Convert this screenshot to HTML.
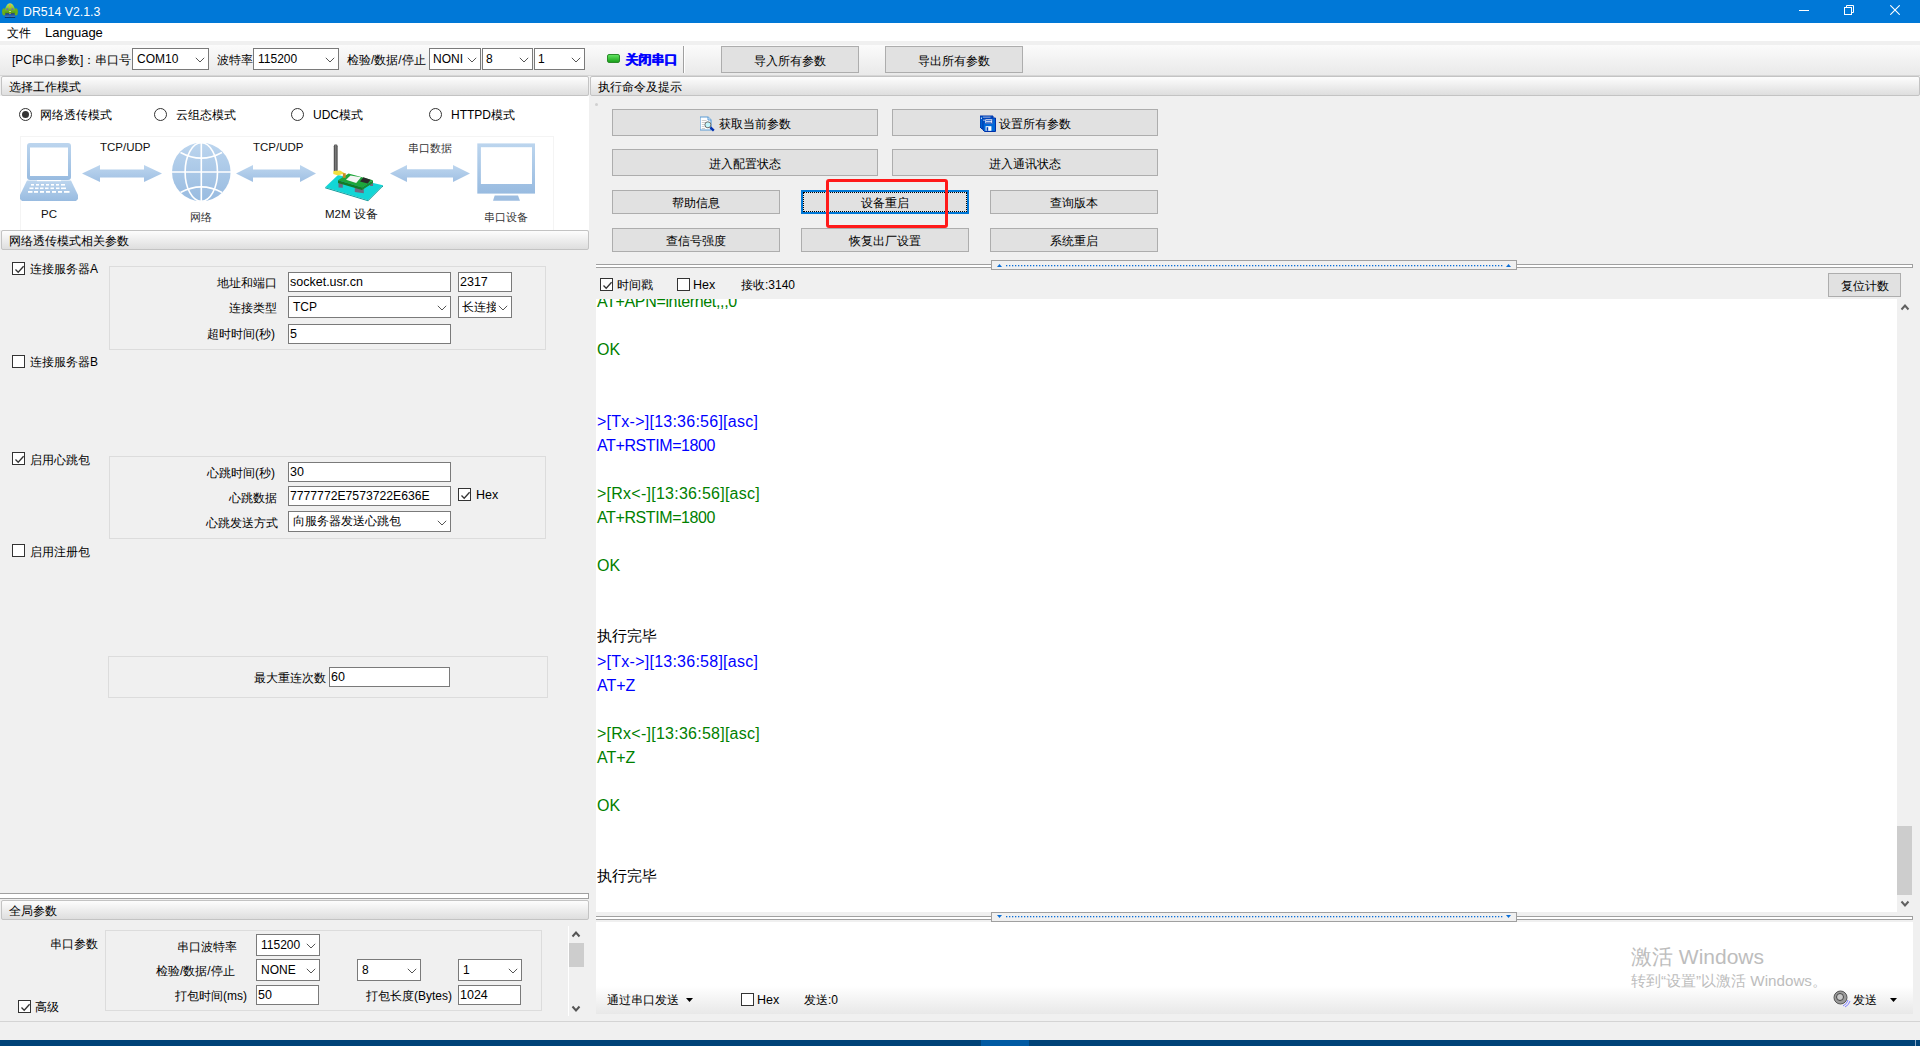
<!DOCTYPE html>
<html><head><meta charset="utf-8">
<style>
*{margin:0;padding:0;box-sizing:border-box}
html,body{width:1920px;height:1046px;overflow:hidden;background:#f0f0f0;font-family:"Liberation Sans",sans-serif;font-size:12px;color:#000}
.a{position:absolute}
.t{position:absolute;white-space:nowrap;line-height:14px;font-size:12px}
.btn{position:absolute;background:#e1e1e1;border:1px solid #adadad;text-align:center;font-size:12px;white-space:nowrap}
.inp{position:absolute;background:#fff;border:1px solid #7a7a7a;white-space:nowrap;font-size:12px;padding-left:1px;overflow:hidden}
.cmb{position:absolute;background:#fff;border:1px solid #7a7a7a;white-space:nowrap;font-size:12px;padding-left:4px;overflow:hidden}
.cmb svg{position:absolute;right:3px;top:50%;margin-top:-2px}
.cb{position:absolute;width:13px;height:13px;border:1px solid #333;background:#fff}
.hdr{position:absolute;height:20px;border:1px solid #c3c3c3;border-radius:2px;background:linear-gradient(#fdfdfd,#dedede);font-size:12px;line-height:19px;padding-left:7px;padding-top:1px;white-space:nowrap}
.grp{position:absolute;border:1px solid #dcdcdc}
.rad{position:absolute;width:13px;height:13px;border:1px solid #333;border-radius:50%;background:#fff}
.log{position:absolute;left:597px;font-size:16px;line-height:24px;white-space:nowrap}
.g{color:#008000}.b{color:#0000ff}
</style></head>
<body>
<!-- title bar -->
<div class="a" style="left:0;top:0;width:1920px;height:23px;background:#0078d7"></div>
<div class="t" style="left:23px;top:5px;color:#fff;font-size:12.3px">DR514 V2.1.3</div>
<!-- menu -->
<div class="a" style="left:0;top:23px;width:1920px;height:18px;background:#fff"></div>
<div class="t" style="left:7px;top:26px">文件</div>
<div class="t" style="left:45px;top:26px;font-size:13px">Language</div>
<!-- toolbar -->
<div class="a" style="left:0;top:45px;width:1920px;height:31px;background:linear-gradient(#fbfbfb,#e9e9e9);border-bottom:1px solid #d6d6d6"></div>


<div class="t" style="left:12px;top:53px">[PC串口参数]：串口号</div>
<div class="cmb" style="left:132px;top:48px;width:77px;height:22px;line-height:20px">COM10<svg width="10" height="6" viewBox="0 0 10 6"><path d="M0.8 0.8 L5 5 L9.2 0.8" fill="none" stroke="#555" stroke-width="1"/></svg></div>
<div class="t" style="left:217px;top:53px">波特率</div>
<div class="cmb" style="left:253px;top:48px;width:86px;height:22px;line-height:20px">115200<svg width="10" height="6" viewBox="0 0 10 6"><path d="M0.8 0.8 L5 5 L9.2 0.8" fill="none" stroke="#555" stroke-width="1"/></svg></div>
<div class="t" style="left:347px;top:53px">检验/数据/停止</div>
<div class="cmb" style="left:429px;top:48px;width:52px;height:22px;line-height:20px;padding-left:3px">NONI<svg width="10" height="6" viewBox="0 0 10 6"><path d="M0.8 0.8 L5 5 L9.2 0.8" fill="none" stroke="#555" stroke-width="1"/></svg></div>
<div class="cmb" style="left:482px;top:48px;width:51px;height:22px;line-height:20px;padding-left:3px">8<svg width="10" height="6" viewBox="0 0 10 6"><path d="M0.8 0.8 L5 5 L9.2 0.8" fill="none" stroke="#555" stroke-width="1"/></svg></div>
<div class="cmb" style="left:534px;top:48px;width:51px;height:22px;line-height:20px;padding-left:3px">1<svg width="10" height="6" viewBox="0 0 10 6"><path d="M0.8 0.8 L5 5 L9.2 0.8" fill="none" stroke="#555" stroke-width="1"/></svg></div>
<div class="a" style="left:607px;top:54px;width:13px;height:9px;border-radius:2px;background:linear-gradient(#5fe35f,#1aa01a);border:1px solid #2a8a2a"></div>
<div class="t" style="left:625px;top:53px;color:#0000ff;font-weight:bold;font-size:12.5px;text-shadow:0.6px 0 0 #0000ff">关闭串口</div>
<div class="a" style="left:683px;top:46px;width:1px;height:27px;background:#a0a0a0"></div>
<div class="a" style="left:684px;top:46px;width:1px;height:27px;background:#fff"></div>
<div class="btn" style="left:721px;top:46px;width:138px;height:27px;line-height:29px">导入所有参数</div>
<div class="btn" style="left:885px;top:46px;width:138px;height:27px;line-height:29px">导出所有参数</div>

<!-- left panel top white -->
<div class="a" style="left:0;top:96px;width:589px;height:134px;background:#fff"></div>

<div class="rad" style="left:19px;top:108px"><div class="a" style="left:2px;top:2px;width:7px;height:7px;border-radius:50%;background:#333"></div></div>
<div class="t" style="left:40px;top:108px">网络透传模式</div>
<div class="rad" style="left:154px;top:108px"></div>
<div class="t" style="left:176px;top:108px">云组态模式</div>
<div class="rad" style="left:291px;top:108px"></div>
<div class="t" style="left:313px;top:108px">UDC模式</div>
<div class="rad" style="left:429px;top:108px"></div>
<div class="t" style="left:451px;top:108px">HTTPD模式</div>

<svg class="a" style="left:0;top:96px" width="589" height="134" viewBox="0 96 589 134">
<defs>
<linearGradient id="lb" x1="0" y1="0" x2="0" y2="1"><stop offset="0" stop-color="#bcd5ee"/><stop offset="1" stop-color="#98bbe0"/></linearGradient>
<linearGradient id="ar" x1="0" y1="0" x2="0" y2="1"><stop offset="0" stop-color="#bdd6ef"/><stop offset="1" stop-color="#a0c0e3"/></linearGradient>
</defs>
<rect x="20.5" y="136.5" width="533" height="100" fill="none" stroke="#f4f4f4"/>
<!-- laptop -->
<rect x="27" y="143" width="44" height="37" rx="3" fill="url(#lb)"/>
<rect x="30" y="147.5" width="38" height="28.5" fill="#fff"/>
<path d="M27 180.5 L71 180.5 L78 195 L78 199 L76 201 L22 201 L20 199 L20 195 Z" fill="url(#lb)"/>
<rect x="37" y="180" width="24" height="1.2" fill="#fff"/>
<g fill="#fff">
<rect x="31" y="184" width="3" height="1.6"/><rect x="36" y="184" width="3" height="1.6"/><rect x="41" y="184" width="3" height="1.6"/><rect x="46" y="184" width="3" height="1.6"/><rect x="51" y="184" width="3" height="1.6"/><rect x="56" y="184" width="3" height="1.6"/><rect x="61" y="184" width="4" height="1.6"/>
<rect x="29.5" y="187.5" width="4" height="1.6"/><rect x="35" y="187.5" width="3.5" height="1.6"/><rect x="40" y="187.5" width="3.5" height="1.6"/><rect x="45" y="187.5" width="3.5" height="1.6"/><rect x="50.5" y="187.5" width="3.5" height="1.6"/><rect x="56" y="187.5" width="3.5" height="1.6"/><rect x="61" y="187.5" width="5" height="1.6"/>
<rect x="28" y="191" width="4.5" height="1.8"/><rect x="34" y="191" width="4" height="1.8"/><rect x="40" y="191" width="4" height="1.8"/><rect x="46" y="191" width="4" height="1.8"/><rect x="52" y="191" width="4" height="1.8"/><rect x="58" y="191" width="4" height="1.8"/><rect x="64" y="191" width="5.5" height="1.8"/>
</g>
<!-- arrows -->
<path d="M82 173.5 L100 165 L100 169.5 L144 169.5 L144 165 L162 173.5 L144 182 L144 177.5 L100 177.5 L100 182 Z" fill="url(#ar)"/>
<path d="M236 173.5 L253 165 L253 169.5 L300 169.5 L300 165 L316 173.5 L300 182 L300 177.5 L253 177.5 L253 182 Z" fill="url(#ar)"/>
<path d="M390 173.5 L407 165 L407 169.3 L453 169.3 L453 165 L470 173.5 L453 182 L453 177.6 L407 177.6 L407 182 Z" fill="url(#ar)"/>
<!-- globe -->
<g>
<circle cx="201.3" cy="172" r="29.3" fill="url(#lb)"/>
<g fill="none" stroke="#fff" stroke-width="1.6">
<line x1="172" y1="172" x2="231" y2="172"/>
<line x1="201.3" y1="142" x2="201.3" y2="202"/>
<ellipse cx="201.3" cy="172" rx="16.2" ry="29.3"/>
<path d="M180.5 152.5 Q201.3 163.8 222 152.5"/>
<path d="M180.5 192.5 Q201.3 181.2 222 192.5"/>
</g>
</g>
<!-- monitor -->
<rect x="477.3" y="143.4" width="57.7" height="50.2" fill="url(#lb)"/>
<rect x="480.9" y="147.2" width="51.1" height="36.8" fill="#fff"/>
<path d="M494.7 195.5 L518 195.5 L520 200.7 L493 200.7 Z" fill="#9dbde0"/>
<!-- device -->
<linearGradient id="ant" x1="0" y1="0" x2="1" y2="0"><stop offset="0" stop-color="#3a3a3a"/><stop offset="0.5" stop-color="#808080"/><stop offset="1" stop-color="#3a3a3a"/></linearGradient>
<path d="M325.1 187.2 L338 174.9 L383 185.3 L368.1 200.3 Z" fill="#12d6d6"/>
<path d="M325.1 187.2 L368.1 200.3 L368.1 201.3 L325.1 188.2 Z" fill="#0e9a9a"/>
<path d="M368.1 200.3 L383 185.3 L383 186.2 L368.1 201.3 Z" fill="#0e9a9a"/>
<path d="M338.5 183 L342.8 183 L342.8 187.8 L338.5 187.4 Z" fill="#6e6a80"/>
<path d="M354.8 187.4 L363.8 187.4 L363.8 193.3 L354.8 192 Z" fill="#6e6a80"/>
<path d="M370 182 L373 182 L373 186 L370 186 Z" fill="#6e6a80"/>
<path d="M338 180.2 L348.5 173.5 L373 180.2 L362 187.4 Z" fill="#1ea53a"/>
<path d="M338 180.2 L362 187.4 L362 190 L338 183 Z" fill="#137a26"/>
<path d="M362 187.4 L373 180.2 L373 183 L362 190 Z" fill="#188a2e"/>
<path d="M346 179.7 L350.5 175.4 L361 177.3 L356.2 183 Z" fill="#f4f4f4"/>
<path d="M360 181.6 L363.4 177.3 L370.5 179.7 L367.7 183.5 Z" fill="#2a2a2a"/>
<rect x="333.8" y="144.3" width="3.8" height="28" rx="1.9" fill="url(#ant)"/>
<path d="M333.3 171 L340 170.6 L344.7 173.2 L338 175.5 L333.3 174 Z" fill="#f2e040"/>
<path d="M342.8 173.2 L345.7 173.2 L345.7 177.8 L342.8 177.8 Z" fill="#c98a22"/>
<!-- labels -->
<g font-family="Liberation Sans, sans-serif" font-size="11.5" fill="#111">
<text x="100" y="150.8">TCP/UDP</text>
<text x="253" y="150.8">TCP/UDP</text>
<text x="41" y="218">PC</text>
<text x="325" y="218">M2M 设备</text>
</g>
<g font-family="Liberation Serif, serif" font-size="11.3" fill="#333">
<text x="190" y="221">网络</text>
<text x="408" y="152">串口数据</text>
<text x="484" y="221">串口设备</text>
</g>
</svg>
<div class="hdr" style="left:1px;top:76px;width:588px">选择工作模式</div>
<div class="hdr" style="left:590px;top:76px;width:1330px">执行命令及提示</div>
<div class="hdr" style="left:1px;top:230px;width:588px">网络透传模式相关参数</div>
<div class="hdr" style="left:1px;top:900px;width:588px">全局参数</div>


<div class="cb" style="left:12px;top:262px"><svg class="a" style="left:1px;top:1px" width="11" height="11" viewBox="0 0 11 11"><path d="M1.5 5.5 L4.2 8.3 L9.6 2.2" fill="none" stroke="#333" stroke-width="1.3"/></svg></div>
<div class="t" style="left:30px;top:262px">连接服务器A</div>
<div class="grp" style="left:109px;top:266px;width:437px;height:84px"></div>
<div class="t" style="left:217px;top:276px">地址和端口</div>
<div class="inp" style="left:288px;top:272px;width:163px;height:20px;line-height:18px;font-size:12.5px">socket.usr.cn</div>
<div class="inp" style="left:458px;top:272px;width:54px;height:20px;line-height:18px;font-size:12.5px">2317</div>
<div class="t" style="left:229px;top:301px">连接类型</div>
<div class="cmb" style="left:288px;top:296px;width:163px;height:22px;line-height:20px">TCP<svg width="10" height="6" viewBox="0 0 10 6"><path d="M0.8 0.8 L5 5 L9.2 0.8" fill="none" stroke="#555" stroke-width="1"/></svg></div>
<div class="cmb" style="left:458px;top:296px;width:54px;height:22px;line-height:20px;padding-left:3px"><span style="display:inline-block;width:34px;overflow:hidden">长连接</span><svg width="10" height="6" viewBox="0 0 10 6"><path d="M0.8 0.8 L5 5 L9.2 0.8" fill="none" stroke="#555" stroke-width="1"/></svg></div>
<div class="t" style="left:207px;top:327px">超时时间(秒)</div>
<div class="inp" style="left:288px;top:324px;width:163px;height:20px;line-height:18px;font-size:12.5px">5</div>

<div class="cb" style="left:12px;top:355px"></div>
<div class="t" style="left:30px;top:355px">连接服务器B</div>

<div class="cb" style="left:12px;top:452px"><svg class="a" style="left:1px;top:1px" width="11" height="11" viewBox="0 0 11 11"><path d="M1.5 5.5 L4.2 8.3 L9.6 2.2" fill="none" stroke="#333" stroke-width="1.3"/></svg></div>
<div class="t" style="left:30px;top:453px">启用心跳包</div>
<div class="grp" style="left:109px;top:456px;width:437px;height:83px"></div>
<div class="t" style="left:207px;top:466px">心跳时间(秒)</div>
<div class="inp" style="left:288px;top:462px;width:163px;height:20px;line-height:18px;font-size:12.5px">30</div>
<div class="t" style="left:229px;top:491px">心跳数据</div>
<div class="inp" style="left:288px;top:486px;width:163px;height:20px;line-height:18px;font-size:12.2px">7777772E7573722E636E</div>
<div class="cb" style="left:458px;top:488px"><svg class="a" style="left:1px;top:1px" width="11" height="11" viewBox="0 0 11 11"><path d="M1.5 5.5 L4.2 8.3 L9.6 2.2" fill="none" stroke="#333" stroke-width="1.3"/></svg></div>
<div class="t" style="left:476px;top:488px;font-size:12.5px">Hex</div>
<div class="t" style="left:206px;top:516px">心跳发送方式</div>
<div class="cmb" style="left:288px;top:511px;width:163px;height:21px;line-height:19px">向服务器发送心跳包<svg width="10" height="6" viewBox="0 0 10 6"><path d="M0.8 0.8 L5 5 L9.2 0.8" fill="none" stroke="#555" stroke-width="1"/></svg></div>

<div class="cb" style="left:12px;top:544px"></div>
<div class="t" style="left:30px;top:545px">启用注册包</div>

<div class="grp" style="left:108px;top:656px;width:440px;height:42px"></div>
<div class="t" style="left:254px;top:671px">最大重连次数</div>
<div class="inp" style="left:329px;top:667px;width:121px;height:20px;line-height:18px;font-size:12.5px">60</div>

<!-- left splitter -->
<div class="a" style="left:0;top:893px;width:589px;height:6px;background:#fff;border-top:1px solid #a0a0a0;border-bottom:1px solid #a0a0a0;border-right:1px solid #a0a0a0"></div>

<div class="grp" style="left:105px;top:930px;width:437px;height:81px"></div>
<div class="t" style="left:50px;top:937px">串口参数</div>
<div class="t" style="left:177px;top:940px">串口波特率</div>
<div class="cmb" style="left:256px;top:934px;width:64px;height:22px;line-height:20px;padding-left:4px"><span style="display:inline-block;width:42px;overflow:hidden">115200</span><svg width="10" height="6" viewBox="0 0 10 6"><path d="M0.8 0.8 L5 5 L9.2 0.8" fill="none" stroke="#555" stroke-width="1"/></svg></div>
<div class="t" style="left:156px;top:964px">检验/数据/停止</div>
<div class="cmb" style="left:256px;top:959px;width:64px;height:22px;line-height:20px">NONE<svg width="10" height="6" viewBox="0 0 10 6"><path d="M0.8 0.8 L5 5 L9.2 0.8" fill="none" stroke="#555" stroke-width="1"/></svg></div>
<div class="cmb" style="left:357px;top:959px;width:64px;height:22px;line-height:20px">8<svg width="10" height="6" viewBox="0 0 10 6"><path d="M0.8 0.8 L5 5 L9.2 0.8" fill="none" stroke="#555" stroke-width="1"/></svg></div>
<div class="cmb" style="left:458px;top:959px;width:64px;height:22px;line-height:20px">1<svg width="10" height="6" viewBox="0 0 10 6"><path d="M0.8 0.8 L5 5 L9.2 0.8" fill="none" stroke="#555" stroke-width="1"/></svg></div>
<div class="t" style="left:175px;top:989px">打包时间(ms)</div>
<div class="inp" style="left:256px;top:985px;width:63px;height:20px;line-height:18px;font-size:12.5px">50</div>
<div class="t" style="left:366px;top:989px">打包长度(Bytes)</div>
<div class="inp" style="left:458px;top:985px;width:63px;height:20px;line-height:18px;font-size:12.5px">1024</div>
<div class="cb" style="left:18px;top:1000px"><svg class="a" style="left:1px;top:1px" width="11" height="11" viewBox="0 0 11 11"><path d="M1.5 5.5 L4.2 8.3 L9.6 2.2" fill="none" stroke="#333" stroke-width="1.3"/></svg></div>
<div class="t" style="left:35px;top:1000px">高级</div>
<!-- left scrollbar -->
<div class="a" style="left:568px;top:926px;width:1px;height:90px;background:#fff"></div>
<svg class="a" style="left:571px;top:930px" width="10" height="8" viewBox="0 0 10 8"><path d="M1.5 6.5 L5 2.5 L8.5 6.5" fill="none" stroke="#555" stroke-width="2"/></svg>
<div class="a" style="left:569px;top:943px;width:15px;height:24px;background:#cdcdcd"></div>
<svg class="a" style="left:571px;top:1005px" width="10" height="8" viewBox="0 0 10 8"><path d="M1.5 1.5 L5 5.5 L8.5 1.5" fill="none" stroke="#555" stroke-width="2"/></svg>


<div class="a" style="left:595px;top:103px;width:3px;height:3px;background:#d0d0d0;border-radius:50%"></div>
<div class="btn" style="left:612px;top:109px;width:266px;height:27px;line-height:28px"><svg style="vertical-align:-4px;margin-right:3px" width="16" height="17" viewBox="0 0 16 17"><path d="M0 2 L8 2 L11 5 L11 15 L0 15 Z" fill="#fff" stroke="#5b9bd5" stroke-width="1.2"/><path d="M8 2 L8 5 L11 5" fill="#e8f0fa" stroke="#5b9bd5" stroke-width="1"/><g stroke="#c8c8c8" stroke-width="0.9"><line x1="1.8" y1="5.5" x2="6.5" y2="5.5"/><line x1="1.8" y1="7.5" x2="6" y2="7.5"/><line x1="1.8" y1="9.5" x2="4.5" y2="9.5"/><line x1="1.8" y1="11.5" x2="4.5" y2="11.5"/><line x1="1.8" y1="13.5" x2="5" y2="13.5"/></g><circle cx="7.9" cy="9.8" r="3" fill="#c4f6fc" stroke="#6a6a6a" stroke-width="1"/><line x1="10.4" y1="12.3" x2="13.8" y2="15.7" stroke="#0030b0" stroke-width="2.4"/></svg>获取当前参数</div>
<div class="btn" style="left:892px;top:109px;width:266px;height:27px;line-height:28px"><svg style="vertical-align:-4px;margin-right:3px" width="16" height="17" viewBox="0 0 16 17"><path d="M0 1 L13 1 L13 14 L2 14 L0 12 Z" fill="#0060d0" stroke="#0030a8" stroke-width="1"/><line x1="3" y1="2.3" x2="10.5" y2="2.3" stroke="#fff" stroke-width="1"/><circle cx="1.4" cy="3.2" r="0.6" fill="#fff"/><path d="M3 3 L15.5 3 L15.5 16.5 L4.5 16.5 L3 15 Z" fill="#0068d8" stroke="#0030a8" stroke-width="1"/><rect x="5" y="4" width="7.5" height="4.6" fill="#fff" stroke="#0030a8" stroke-width="0.6"/><line x1="6" y1="5.6" x2="11.5" y2="5.6" stroke="#0040b8" stroke-width="0.8"/><line x1="6" y1="7.3" x2="11.5" y2="7.3" stroke="#0040b8" stroke-width="0.8"/><circle cx="4" cy="5.2" r="0.6" fill="#fff"/><rect x="5.6" y="11.2" width="5.8" height="4.6" fill="#fff"/><rect x="6.6" y="12.2" width="1.6" height="3.6" fill="#0040b8"/></svg>设置所有参数</div>
<div class="btn" style="left:612px;top:149px;width:266px;height:27px;line-height:28px">进入配置状态</div>
<div class="btn" style="left:892px;top:149px;width:266px;height:27px;line-height:28px">进入通讯状态</div>
<div class="btn" style="left:612px;top:190px;width:168px;height:24px;line-height:25px">帮助信息</div>
<div class="btn" style="left:801px;top:190px;width:168px;height:24px;line-height:22px;border:2px solid #0078d7"><div class="a" style="left:0;top:0;right:0;bottom:0;border:1px dotted #000"></div>设备重启</div>
<div class="btn" style="left:990px;top:190px;width:168px;height:24px;line-height:25px">查询版本</div>
<div class="btn" style="left:612px;top:228px;width:168px;height:24px;line-height:25px">查信号强度</div>
<div class="btn" style="left:801px;top:228px;width:168px;height:24px;line-height:25px">恢复出厂设置</div>
<div class="btn" style="left:990px;top:228px;width:168px;height:24px;line-height:25px">系统重启</div>
<div class="a" style="left:826px;top:179px;width:122px;height:49px;border:3px solid #ff1a1a;border-radius:3px"></div>

<!-- top splitter -->
<div class="a" style="left:596px;top:264px;width:1317px;height:4px;background:#fff;border-top:1px solid #a0a0a0;border-bottom:1px solid #a0a0a0;border-right:1px solid #a0a0a0"></div>
<div class="a" style="left:991px;top:260px;width:526px;height:10px;background:#f0f0f0;border:1px solid #a0a0a0"></div>
<svg class="a" style="left:991px;top:260px" width="526" height="10"><g fill="#0a6fd8"><path d="M6 7 L11 7 L8.5 4 Z"/><path d="M515 7 L520 7 L517.5 4 Z"/><rect x="15" y="5" width="1.3" height="1.3"/><rect x="18" y="5" width="1.3" height="1.3"/><rect x="21" y="5" width="1.3" height="1.3"/><rect x="24" y="5" width="1.3" height="1.3"/><rect x="27" y="5" width="1.3" height="1.3"/><rect x="30" y="5" width="1.3" height="1.3"/><rect x="33" y="5" width="1.3" height="1.3"/><rect x="36" y="5" width="1.3" height="1.3"/><rect x="39" y="5" width="1.3" height="1.3"/><rect x="42" y="5" width="1.3" height="1.3"/><rect x="45" y="5" width="1.3" height="1.3"/><rect x="48" y="5" width="1.3" height="1.3"/><rect x="51" y="5" width="1.3" height="1.3"/><rect x="54" y="5" width="1.3" height="1.3"/><rect x="57" y="5" width="1.3" height="1.3"/><rect x="60" y="5" width="1.3" height="1.3"/><rect x="63" y="5" width="1.3" height="1.3"/><rect x="66" y="5" width="1.3" height="1.3"/><rect x="69" y="5" width="1.3" height="1.3"/><rect x="72" y="5" width="1.3" height="1.3"/><rect x="75" y="5" width="1.3" height="1.3"/><rect x="78" y="5" width="1.3" height="1.3"/><rect x="81" y="5" width="1.3" height="1.3"/><rect x="84" y="5" width="1.3" height="1.3"/><rect x="87" y="5" width="1.3" height="1.3"/><rect x="90" y="5" width="1.3" height="1.3"/><rect x="93" y="5" width="1.3" height="1.3"/><rect x="96" y="5" width="1.3" height="1.3"/><rect x="99" y="5" width="1.3" height="1.3"/><rect x="102" y="5" width="1.3" height="1.3"/><rect x="105" y="5" width="1.3" height="1.3"/><rect x="108" y="5" width="1.3" height="1.3"/><rect x="111" y="5" width="1.3" height="1.3"/><rect x="114" y="5" width="1.3" height="1.3"/><rect x="117" y="5" width="1.3" height="1.3"/><rect x="120" y="5" width="1.3" height="1.3"/><rect x="123" y="5" width="1.3" height="1.3"/><rect x="126" y="5" width="1.3" height="1.3"/><rect x="129" y="5" width="1.3" height="1.3"/><rect x="132" y="5" width="1.3" height="1.3"/><rect x="135" y="5" width="1.3" height="1.3"/><rect x="138" y="5" width="1.3" height="1.3"/><rect x="141" y="5" width="1.3" height="1.3"/><rect x="144" y="5" width="1.3" height="1.3"/><rect x="147" y="5" width="1.3" height="1.3"/><rect x="150" y="5" width="1.3" height="1.3"/><rect x="153" y="5" width="1.3" height="1.3"/><rect x="156" y="5" width="1.3" height="1.3"/><rect x="159" y="5" width="1.3" height="1.3"/><rect x="162" y="5" width="1.3" height="1.3"/><rect x="165" y="5" width="1.3" height="1.3"/><rect x="168" y="5" width="1.3" height="1.3"/><rect x="171" y="5" width="1.3" height="1.3"/><rect x="174" y="5" width="1.3" height="1.3"/><rect x="177" y="5" width="1.3" height="1.3"/><rect x="180" y="5" width="1.3" height="1.3"/><rect x="183" y="5" width="1.3" height="1.3"/><rect x="186" y="5" width="1.3" height="1.3"/><rect x="189" y="5" width="1.3" height="1.3"/><rect x="192" y="5" width="1.3" height="1.3"/><rect x="195" y="5" width="1.3" height="1.3"/><rect x="198" y="5" width="1.3" height="1.3"/><rect x="201" y="5" width="1.3" height="1.3"/><rect x="204" y="5" width="1.3" height="1.3"/><rect x="207" y="5" width="1.3" height="1.3"/><rect x="210" y="5" width="1.3" height="1.3"/><rect x="213" y="5" width="1.3" height="1.3"/><rect x="216" y="5" width="1.3" height="1.3"/><rect x="219" y="5" width="1.3" height="1.3"/><rect x="222" y="5" width="1.3" height="1.3"/><rect x="225" y="5" width="1.3" height="1.3"/><rect x="228" y="5" width="1.3" height="1.3"/><rect x="231" y="5" width="1.3" height="1.3"/><rect x="234" y="5" width="1.3" height="1.3"/><rect x="237" y="5" width="1.3" height="1.3"/><rect x="240" y="5" width="1.3" height="1.3"/><rect x="243" y="5" width="1.3" height="1.3"/><rect x="246" y="5" width="1.3" height="1.3"/><rect x="249" y="5" width="1.3" height="1.3"/><rect x="252" y="5" width="1.3" height="1.3"/><rect x="255" y="5" width="1.3" height="1.3"/><rect x="258" y="5" width="1.3" height="1.3"/><rect x="261" y="5" width="1.3" height="1.3"/><rect x="264" y="5" width="1.3" height="1.3"/><rect x="267" y="5" width="1.3" height="1.3"/><rect x="270" y="5" width="1.3" height="1.3"/><rect x="273" y="5" width="1.3" height="1.3"/><rect x="276" y="5" width="1.3" height="1.3"/><rect x="279" y="5" width="1.3" height="1.3"/><rect x="282" y="5" width="1.3" height="1.3"/><rect x="285" y="5" width="1.3" height="1.3"/><rect x="288" y="5" width="1.3" height="1.3"/><rect x="291" y="5" width="1.3" height="1.3"/><rect x="294" y="5" width="1.3" height="1.3"/><rect x="297" y="5" width="1.3" height="1.3"/><rect x="300" y="5" width="1.3" height="1.3"/><rect x="303" y="5" width="1.3" height="1.3"/><rect x="306" y="5" width="1.3" height="1.3"/><rect x="309" y="5" width="1.3" height="1.3"/><rect x="312" y="5" width="1.3" height="1.3"/><rect x="315" y="5" width="1.3" height="1.3"/><rect x="318" y="5" width="1.3" height="1.3"/><rect x="321" y="5" width="1.3" height="1.3"/><rect x="324" y="5" width="1.3" height="1.3"/><rect x="327" y="5" width="1.3" height="1.3"/><rect x="330" y="5" width="1.3" height="1.3"/><rect x="333" y="5" width="1.3" height="1.3"/><rect x="336" y="5" width="1.3" height="1.3"/><rect x="339" y="5" width="1.3" height="1.3"/><rect x="342" y="5" width="1.3" height="1.3"/><rect x="345" y="5" width="1.3" height="1.3"/><rect x="348" y="5" width="1.3" height="1.3"/><rect x="351" y="5" width="1.3" height="1.3"/><rect x="354" y="5" width="1.3" height="1.3"/><rect x="357" y="5" width="1.3" height="1.3"/><rect x="360" y="5" width="1.3" height="1.3"/><rect x="363" y="5" width="1.3" height="1.3"/><rect x="366" y="5" width="1.3" height="1.3"/><rect x="369" y="5" width="1.3" height="1.3"/><rect x="372" y="5" width="1.3" height="1.3"/><rect x="375" y="5" width="1.3" height="1.3"/><rect x="378" y="5" width="1.3" height="1.3"/><rect x="381" y="5" width="1.3" height="1.3"/><rect x="384" y="5" width="1.3" height="1.3"/><rect x="387" y="5" width="1.3" height="1.3"/><rect x="390" y="5" width="1.3" height="1.3"/><rect x="393" y="5" width="1.3" height="1.3"/><rect x="396" y="5" width="1.3" height="1.3"/><rect x="399" y="5" width="1.3" height="1.3"/><rect x="402" y="5" width="1.3" height="1.3"/><rect x="405" y="5" width="1.3" height="1.3"/><rect x="408" y="5" width="1.3" height="1.3"/><rect x="411" y="5" width="1.3" height="1.3"/><rect x="414" y="5" width="1.3" height="1.3"/><rect x="417" y="5" width="1.3" height="1.3"/><rect x="420" y="5" width="1.3" height="1.3"/><rect x="423" y="5" width="1.3" height="1.3"/><rect x="426" y="5" width="1.3" height="1.3"/><rect x="429" y="5" width="1.3" height="1.3"/><rect x="432" y="5" width="1.3" height="1.3"/><rect x="435" y="5" width="1.3" height="1.3"/><rect x="438" y="5" width="1.3" height="1.3"/><rect x="441" y="5" width="1.3" height="1.3"/><rect x="444" y="5" width="1.3" height="1.3"/><rect x="447" y="5" width="1.3" height="1.3"/><rect x="450" y="5" width="1.3" height="1.3"/><rect x="453" y="5" width="1.3" height="1.3"/><rect x="456" y="5" width="1.3" height="1.3"/><rect x="459" y="5" width="1.3" height="1.3"/><rect x="462" y="5" width="1.3" height="1.3"/><rect x="465" y="5" width="1.3" height="1.3"/><rect x="468" y="5" width="1.3" height="1.3"/><rect x="471" y="5" width="1.3" height="1.3"/><rect x="474" y="5" width="1.3" height="1.3"/><rect x="477" y="5" width="1.3" height="1.3"/><rect x="480" y="5" width="1.3" height="1.3"/><rect x="483" y="5" width="1.3" height="1.3"/><rect x="486" y="5" width="1.3" height="1.3"/><rect x="489" y="5" width="1.3" height="1.3"/><rect x="492" y="5" width="1.3" height="1.3"/><rect x="495" y="5" width="1.3" height="1.3"/><rect x="498" y="5" width="1.3" height="1.3"/><rect x="501" y="5" width="1.3" height="1.3"/><rect x="504" y="5" width="1.3" height="1.3"/><rect x="507" y="5" width="1.3" height="1.3"/><rect x="510" y="5" width="1.3" height="1.3"/></g></svg>

<div class="cb" style="left:600px;top:278px"><svg class="a" style="left:1px;top:1px" width="11" height="11" viewBox="0 0 11 11"><path d="M1.5 5.5 L4.2 8.3 L9.6 2.2" fill="none" stroke="#333" stroke-width="1.3"/></svg></div>
<div class="t" style="left:617px;top:278px">时间戳</div>
<div class="cb" style="left:677px;top:278px"></div>
<div class="t" style="left:693px;top:278px;font-size:12.5px">Hex</div>
<div class="t" style="left:741px;top:278px">接收:3140</div>
<div class="btn" style="left:1828px;top:273px;width:73px;height:24px;line-height:25px">复位计数</div>

<!-- right text area -->
<div class="a" style="left:596px;top:299px;width:1301px;height:613px;background:#fff;overflow:hidden" id="logbox"></div>
<div class="a" style="left:0;top:0;width:1897px;height:912px;overflow:hidden;clip-path:inset(299px 0 0 596px)">
<div class="log g" style="top:290px;letter-spacing:-0.35px">AT+APN=internet,,,0</div>
<div class="log g" style="top:338px">OK</div>
<div class="log b" style="top:410px;letter-spacing:0.25px">&gt;[Tx-&gt;][13:36:56][asc]</div>
<div class="log b" style="top:434px;letter-spacing:-0.4px">AT+RSTIM=1800</div>
<div class="log g" style="top:482px;letter-spacing:0.25px">&gt;[Rx&lt;-][13:36:56][asc]</div>
<div class="log g" style="top:506px;letter-spacing:-0.4px">AT+RSTIM=1800</div>
<div class="log g" style="top:554px">OK</div>
<div class="log" style="top:624px;font-size:15px">执行完毕</div>
<div class="log b" style="top:650px;letter-spacing:0.25px">&gt;[Tx-&gt;][13:36:58][asc]</div>
<div class="log b" style="top:674px">AT+Z</div>
<div class="log g" style="top:722px;letter-spacing:0.25px">&gt;[Rx&lt;-][13:36:58][asc]</div>
<div class="log g" style="top:746px">AT+Z</div>
<div class="log g" style="top:794px">OK</div>
<div class="log" style="top:864px;font-size:15px">执行完毕</div>
</div>
<div class="a" style="left:1897px;top:299px;width:16px;height:613px;background:#f0f0f0"></div>
<svg class="a" style="left:1900px;top:303px" width="10" height="8" viewBox="0 0 10 8"><path d="M1.5 6.5 L5 2.5 L8.5 6.5" fill="none" stroke="#606060" stroke-width="2"/></svg>
<div class="a" style="left:1897px;top:826px;width:15px;height:69px;background:#cdcdcd"></div>
<svg class="a" style="left:1900px;top:900px" width="10" height="8" viewBox="0 0 10 8"><path d="M1.5 1.5 L5 5.5 L8.5 1.5" fill="none" stroke="#606060" stroke-width="2"/></svg>

<!-- send area -->
<div class="a" style="left:596px;top:922px;width:1317px;height:92px;background:linear-gradient(#fff 0,#fff 64px,#e8e8e8 92px)"></div>

<!-- bottom splitter -->
<div class="a" style="left:596px;top:916px;width:1317px;height:4px;background:#fff;border-top:1px solid #a0a0a0;border-bottom:1px solid #a0a0a0;border-right:1px solid #a0a0a0"></div>
<div class="a" style="left:991px;top:912px;width:526px;height:10px;background:#f0f0f0;border:1px solid #a0a0a0"></div>
<svg class="a" style="left:991px;top:912px" width="526" height="10"><g fill="#0a6fd8"><path d="M6 3 L11 3 L8.5 6 Z"/><path d="M515 3 L520 3 L517.5 6 Z"/><rect x="15" y="4" width="1.3" height="1.3"/><rect x="18" y="4" width="1.3" height="1.3"/><rect x="21" y="4" width="1.3" height="1.3"/><rect x="24" y="4" width="1.3" height="1.3"/><rect x="27" y="4" width="1.3" height="1.3"/><rect x="30" y="4" width="1.3" height="1.3"/><rect x="33" y="4" width="1.3" height="1.3"/><rect x="36" y="4" width="1.3" height="1.3"/><rect x="39" y="4" width="1.3" height="1.3"/><rect x="42" y="4" width="1.3" height="1.3"/><rect x="45" y="4" width="1.3" height="1.3"/><rect x="48" y="4" width="1.3" height="1.3"/><rect x="51" y="4" width="1.3" height="1.3"/><rect x="54" y="4" width="1.3" height="1.3"/><rect x="57" y="4" width="1.3" height="1.3"/><rect x="60" y="4" width="1.3" height="1.3"/><rect x="63" y="4" width="1.3" height="1.3"/><rect x="66" y="4" width="1.3" height="1.3"/><rect x="69" y="4" width="1.3" height="1.3"/><rect x="72" y="4" width="1.3" height="1.3"/><rect x="75" y="4" width="1.3" height="1.3"/><rect x="78" y="4" width="1.3" height="1.3"/><rect x="81" y="4" width="1.3" height="1.3"/><rect x="84" y="4" width="1.3" height="1.3"/><rect x="87" y="4" width="1.3" height="1.3"/><rect x="90" y="4" width="1.3" height="1.3"/><rect x="93" y="4" width="1.3" height="1.3"/><rect x="96" y="4" width="1.3" height="1.3"/><rect x="99" y="4" width="1.3" height="1.3"/><rect x="102" y="4" width="1.3" height="1.3"/><rect x="105" y="4" width="1.3" height="1.3"/><rect x="108" y="4" width="1.3" height="1.3"/><rect x="111" y="4" width="1.3" height="1.3"/><rect x="114" y="4" width="1.3" height="1.3"/><rect x="117" y="4" width="1.3" height="1.3"/><rect x="120" y="4" width="1.3" height="1.3"/><rect x="123" y="4" width="1.3" height="1.3"/><rect x="126" y="4" width="1.3" height="1.3"/><rect x="129" y="4" width="1.3" height="1.3"/><rect x="132" y="4" width="1.3" height="1.3"/><rect x="135" y="4" width="1.3" height="1.3"/><rect x="138" y="4" width="1.3" height="1.3"/><rect x="141" y="4" width="1.3" height="1.3"/><rect x="144" y="4" width="1.3" height="1.3"/><rect x="147" y="4" width="1.3" height="1.3"/><rect x="150" y="4" width="1.3" height="1.3"/><rect x="153" y="4" width="1.3" height="1.3"/><rect x="156" y="4" width="1.3" height="1.3"/><rect x="159" y="4" width="1.3" height="1.3"/><rect x="162" y="4" width="1.3" height="1.3"/><rect x="165" y="4" width="1.3" height="1.3"/><rect x="168" y="4" width="1.3" height="1.3"/><rect x="171" y="4" width="1.3" height="1.3"/><rect x="174" y="4" width="1.3" height="1.3"/><rect x="177" y="4" width="1.3" height="1.3"/><rect x="180" y="4" width="1.3" height="1.3"/><rect x="183" y="4" width="1.3" height="1.3"/><rect x="186" y="4" width="1.3" height="1.3"/><rect x="189" y="4" width="1.3" height="1.3"/><rect x="192" y="4" width="1.3" height="1.3"/><rect x="195" y="4" width="1.3" height="1.3"/><rect x="198" y="4" width="1.3" height="1.3"/><rect x="201" y="4" width="1.3" height="1.3"/><rect x="204" y="4" width="1.3" height="1.3"/><rect x="207" y="4" width="1.3" height="1.3"/><rect x="210" y="4" width="1.3" height="1.3"/><rect x="213" y="4" width="1.3" height="1.3"/><rect x="216" y="4" width="1.3" height="1.3"/><rect x="219" y="4" width="1.3" height="1.3"/><rect x="222" y="4" width="1.3" height="1.3"/><rect x="225" y="4" width="1.3" height="1.3"/><rect x="228" y="4" width="1.3" height="1.3"/><rect x="231" y="4" width="1.3" height="1.3"/><rect x="234" y="4" width="1.3" height="1.3"/><rect x="237" y="4" width="1.3" height="1.3"/><rect x="240" y="4" width="1.3" height="1.3"/><rect x="243" y="4" width="1.3" height="1.3"/><rect x="246" y="4" width="1.3" height="1.3"/><rect x="249" y="4" width="1.3" height="1.3"/><rect x="252" y="4" width="1.3" height="1.3"/><rect x="255" y="4" width="1.3" height="1.3"/><rect x="258" y="4" width="1.3" height="1.3"/><rect x="261" y="4" width="1.3" height="1.3"/><rect x="264" y="4" width="1.3" height="1.3"/><rect x="267" y="4" width="1.3" height="1.3"/><rect x="270" y="4" width="1.3" height="1.3"/><rect x="273" y="4" width="1.3" height="1.3"/><rect x="276" y="4" width="1.3" height="1.3"/><rect x="279" y="4" width="1.3" height="1.3"/><rect x="282" y="4" width="1.3" height="1.3"/><rect x="285" y="4" width="1.3" height="1.3"/><rect x="288" y="4" width="1.3" height="1.3"/><rect x="291" y="4" width="1.3" height="1.3"/><rect x="294" y="4" width="1.3" height="1.3"/><rect x="297" y="4" width="1.3" height="1.3"/><rect x="300" y="4" width="1.3" height="1.3"/><rect x="303" y="4" width="1.3" height="1.3"/><rect x="306" y="4" width="1.3" height="1.3"/><rect x="309" y="4" width="1.3" height="1.3"/><rect x="312" y="4" width="1.3" height="1.3"/><rect x="315" y="4" width="1.3" height="1.3"/><rect x="318" y="4" width="1.3" height="1.3"/><rect x="321" y="4" width="1.3" height="1.3"/><rect x="324" y="4" width="1.3" height="1.3"/><rect x="327" y="4" width="1.3" height="1.3"/><rect x="330" y="4" width="1.3" height="1.3"/><rect x="333" y="4" width="1.3" height="1.3"/><rect x="336" y="4" width="1.3" height="1.3"/><rect x="339" y="4" width="1.3" height="1.3"/><rect x="342" y="4" width="1.3" height="1.3"/><rect x="345" y="4" width="1.3" height="1.3"/><rect x="348" y="4" width="1.3" height="1.3"/><rect x="351" y="4" width="1.3" height="1.3"/><rect x="354" y="4" width="1.3" height="1.3"/><rect x="357" y="4" width="1.3" height="1.3"/><rect x="360" y="4" width="1.3" height="1.3"/><rect x="363" y="4" width="1.3" height="1.3"/><rect x="366" y="4" width="1.3" height="1.3"/><rect x="369" y="4" width="1.3" height="1.3"/><rect x="372" y="4" width="1.3" height="1.3"/><rect x="375" y="4" width="1.3" height="1.3"/><rect x="378" y="4" width="1.3" height="1.3"/><rect x="381" y="4" width="1.3" height="1.3"/><rect x="384" y="4" width="1.3" height="1.3"/><rect x="387" y="4" width="1.3" height="1.3"/><rect x="390" y="4" width="1.3" height="1.3"/><rect x="393" y="4" width="1.3" height="1.3"/><rect x="396" y="4" width="1.3" height="1.3"/><rect x="399" y="4" width="1.3" height="1.3"/><rect x="402" y="4" width="1.3" height="1.3"/><rect x="405" y="4" width="1.3" height="1.3"/><rect x="408" y="4" width="1.3" height="1.3"/><rect x="411" y="4" width="1.3" height="1.3"/><rect x="414" y="4" width="1.3" height="1.3"/><rect x="417" y="4" width="1.3" height="1.3"/><rect x="420" y="4" width="1.3" height="1.3"/><rect x="423" y="4" width="1.3" height="1.3"/><rect x="426" y="4" width="1.3" height="1.3"/><rect x="429" y="4" width="1.3" height="1.3"/><rect x="432" y="4" width="1.3" height="1.3"/><rect x="435" y="4" width="1.3" height="1.3"/><rect x="438" y="4" width="1.3" height="1.3"/><rect x="441" y="4" width="1.3" height="1.3"/><rect x="444" y="4" width="1.3" height="1.3"/><rect x="447" y="4" width="1.3" height="1.3"/><rect x="450" y="4" width="1.3" height="1.3"/><rect x="453" y="4" width="1.3" height="1.3"/><rect x="456" y="4" width="1.3" height="1.3"/><rect x="459" y="4" width="1.3" height="1.3"/><rect x="462" y="4" width="1.3" height="1.3"/><rect x="465" y="4" width="1.3" height="1.3"/><rect x="468" y="4" width="1.3" height="1.3"/><rect x="471" y="4" width="1.3" height="1.3"/><rect x="474" y="4" width="1.3" height="1.3"/><rect x="477" y="4" width="1.3" height="1.3"/><rect x="480" y="4" width="1.3" height="1.3"/><rect x="483" y="4" width="1.3" height="1.3"/><rect x="486" y="4" width="1.3" height="1.3"/><rect x="489" y="4" width="1.3" height="1.3"/><rect x="492" y="4" width="1.3" height="1.3"/><rect x="495" y="4" width="1.3" height="1.3"/><rect x="498" y="4" width="1.3" height="1.3"/><rect x="501" y="4" width="1.3" height="1.3"/><rect x="504" y="4" width="1.3" height="1.3"/><rect x="507" y="4" width="1.3" height="1.3"/><rect x="510" y="4" width="1.3" height="1.3"/></g></svg>

<div class="t" style="left:607px;top:993px">通过串口发送</div>
<svg class="a" style="left:686px;top:998px" width="8" height="5"><path d="M0 0 L7 0 L3.5 4 Z" fill="#000"/></svg>
<div class="cb" style="left:741px;top:993px"></div>
<div class="t" style="left:757px;top:993px;font-size:12.5px">Hex</div>
<div class="t" style="left:804px;top:993px">发送:0</div>
<div class="t" style="left:1631px;top:945px;font-size:21px;line-height:24px;color:#bdbdbd">激活 Windows</div>
<div class="t" style="left:1631px;top:972px;font-size:15.2px;line-height:18px;color:#bdbdbd">转到“设置”以激活 Windows。</div>
<svg class="a" style="left:1833px;top:990px" width="18" height="18" viewBox="0 0 18 18"><circle cx="7.5" cy="7.5" r="6.5" fill="#9a9a9a" stroke="#555"/><circle cx="7" cy="7" r="3.5" fill="#c8c8c8" stroke="#444"/><path d="M10 16 Q14 14 15 10 M12 17 Q16 15 17 11" fill="none" stroke="#7070ff" stroke-width="0.9"/></svg>
<div class="t" style="left:1853px;top:993px">发送</div>
<svg class="a" style="left:1890px;top:998px" width="8" height="5"><path d="M0 0 L7 0 L3.5 4 Z" fill="#000"/></svg>
<!-- window controls -->
<div class="a" style="left:1799px;top:10px;width:10px;height:1px;background:#fff"></div>
<svg class="a" style="left:1844px;top:5px" width="10" height="10" viewBox="0 0 10 10"><rect x="0.5" y="2.5" width="7" height="7" fill="none" stroke="#fff"/><path d="M2.5 2.5 L2.5 0.5 L9.5 0.5 L9.5 7.5 L7.5 7.5" fill="none" stroke="#fff"/></svg>
<svg class="a" style="left:1890px;top:5px" width="10" height="10" viewBox="0 0 10 10"><path d="M0.3 0.3 L9.7 9.7 M9.7 0.3 L0.3 9.7" stroke="#fff" stroke-width="1.1"/></svg>
<!-- app icon -->
<svg class="a" style="left:0;top:0" width="20" height="20" viewBox="0 0 20 20">
<defs><linearGradient id="ig" x1="0" y1="0" x2="0" y2="1"><stop offset="0" stop-color="#b8e860"/><stop offset="1" stop-color="#4e9a10"/></linearGradient>
<linearGradient id="il" x1="0" y1="0" x2="0" y2="1"><stop offset="0" stop-color="#102a7a"/><stop offset="1" stop-color="#4a80c0"/></linearGradient></defs>
<ellipse cx="4" cy="11.8" rx="1.9" ry="3.6" fill="#6cb018"/>
<ellipse cx="16" cy="11.8" rx="1.9" ry="3.6" fill="#6cb018"/>
<rect x="5.3" y="12.3" width="4.2" height="5" fill="url(#il)"/>
<rect x="10.5" y="12.3" width="4.2" height="5" fill="url(#il)"/>
<rect x="4.8" y="17" width="10.4" height="0.9" fill="#06306a"/>
<path d="M4.6 13.2 C4.6 8 7 3.3 10 3.3 C13 3.3 15.4 8 15.4 13.2 Z" fill="url(#ig)"/>
<rect x="9.2" y="4.2" width="1.6" height="3.4" rx="0.6" fill="#f0a030"/>
<circle cx="7.4" cy="9.2" r="0.95" fill="#7060c0"/>
<circle cx="12.4" cy="9.2" r="0.95" fill="#7060c0"/>
<ellipse cx="10" cy="11.5" rx="1" ry="0.45" fill="#fff"/>
<rect x="9.3" y="12.8" width="1.4" height="1.2" fill="#e0a020"/>
</svg>

<!-- bottom line -->
<div class="a" style="left:0;top:1021px;width:1920px;height:1px;background:#d4d4d4"></div>
<!-- taskbar -->
<div class="a" style="left:0;top:1040px;width:1920px;height:6px;background:#004378"></div>
<div class="a" style="left:981px;top:1040px;width:48px;height:6px;background:#005aa3"></div>
<div class="a" style="left:1915px;top:1040px;width:1px;height:6px;background:#8aa8c8"></div>
</body></html>
